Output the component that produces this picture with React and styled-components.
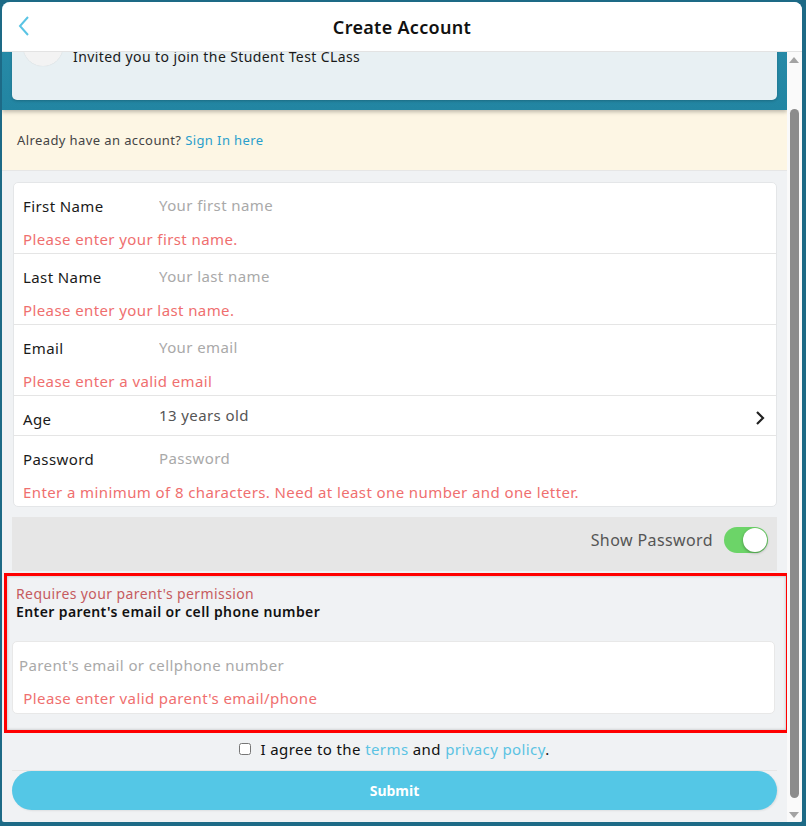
import React from "react";
import styled, { createGlobalStyle } from "styled-components";

const GlobalStyle = createGlobalStyle`
  html, body {
    margin: 0;
    padding: 0;
    background: #1d6a86;
    overflow: hidden;
  }
  * {
    box-sizing: border-box;
  }
  body {
    font-family: "Noto Sans", Lato, sans-serif;
    letter-spacing: 0.4px;
  }
`;

const Frame = styled.div`
  width: 800px;
  height: 820px;
  margin: 2px 0 0 2px;
  background: #f0f2f4;
  border-radius: 8px 8px 2px 2px;
  overflow: hidden;
  display: flex;
  flex-direction: column;
  position: relative;
`;

/* sticky header sits over the scrolled content */
const Header = styled.div`
  position: absolute;
  top: 0;
  left: 0;
  right: 0;
  height: 50px;
  background: #ffffff;
  border-bottom: 1px solid #e3e3e3;
  display: flex;
  align-items: center;
  justify-content: center;
  z-index: 3;
`;

const BackButton = styled.button`
  position: absolute;
  left: 12px;
  top: 13px;
  border: none;
  background: none;
  padding: 0;
  width: 20px;
  height: 24px;
`;

const Title = styled.h1`
  margin: 0;
  font-size: 18px;
  font-weight: 600;
  color: #111;
  letter-spacing: 0.3px;
`;

const Body = styled.div`
  flex: 1;
  display: flex;
  min-height: 0;
  margin-top: 50px;
`;

const Scroll = styled.div`
  flex: 1;
`;

const ScrollContent = styled.div`
  margin-top: ${(p) => -p.$offset}px;
`;

const Scrollbar = styled.div`
  width: 15px;
  flex-shrink: 0;
  background: #fafafa;
  display: flex;
  flex-direction: column;
  align-items: center;
  padding: 5px 1px 4px 0;
  position: relative;
  z-index: 2;
`;

const Arrow = styled.div`
  width: 0;
  height: 0;
  border-left: 5px solid transparent;
  border-right: 5px solid transparent;
  ${(p) =>
    p.$down
      ? "border-top: 6px solid #a3a3a3;"
      : "border-bottom: 6px solid #a3a3a3;"}
`;

const Track = styled.div`
  flex: 1;
  width: 100%;
  display: flex;
  justify-content: center;
  padding: 46px 0 14px;
`;

const Thumb = styled.div`
  width: 9px;
  height: 100%;
  background: #8c8c8c;
  border-radius: 5px;
`;

const InviteBand = styled.div`
  background: linear-gradient(180deg, #2a8eab 0%, #2285a2 100%);
  padding: 10px;
  box-shadow: 0 2px 4px rgba(0, 0, 0, 0.25);
  position: relative;
  z-index: 1;
`;

const InviteCard = styled.div`
  background: #e8f0f3;
  border-radius: 5px;
  height: 90px;
  padding: 16px 12px 0 11px;
  display: flex;
  align-items: flex-start;
  gap: 10px;
  box-shadow: 0 1px 3px rgba(0, 0, 0, 0.2);
`;

const Avatar = styled.div`
  width: 40px;
  height: 40px;
  border-radius: 50%;
  background: #f3f3f3;
  box-shadow: 0 0 1px rgba(0, 0, 0, 0.15);
`;

const InviteText = styled.div`
  margin-top: 21px;
  font-size: 14px;
  line-height: 20px;
  color: #1a1a1a;
`;

const SignInBar = styled.div`
  background: #fdf6e4;
  height: 61px;
  border-bottom: 1px solid #e6e6e6;
  display: flex;
  align-items: center;
  padding: 0 15px;
  font-size: 13px;
  color: #444;
`;

const Link = styled.a`
  color: ${(p) => p.$color || "#2a9fcc"};
  text-decoration: none;
`;

const Section = styled.div`
  padding: 11px 10px 0 10px;
`;

const FormCard = styled.div`
  background: #fff;
  border: 1px solid #e4e6e8;
  border-radius: 5px;
  margin-left: 1px;
`;

const Row = styled.div`
  padding: ${(p) => (p.$compact ? "11px 10px 6px 9px" : "11px 10px 4px 9px")};
  border-bottom: 1px solid #e5e5e5;
  &:last-child {
    border-bottom: none;
  }
`;

const FieldLine = styled.div`
  display: flex;
  align-items: center;
  height: 22px;
`;

const Label = styled.label`
  width: 136px;
  flex-shrink: 0;
  font-size: 15px;
  color: #1a1a1a;
  padding-top: 1px;
`;

const Input = styled.input`
  flex: 1;
  width: 100%;
  height: 20px;
  line-height: 20px;
  border: none;
  outline: none;
  background: transparent;
  padding: 0;
  font-family: inherit;
  font-size: 15px;
  letter-spacing: inherit;
  color: #333;
  &::placeholder {
    color: #a9a9a9;
  }
`;

const Value = styled.div`
  flex: 1;
  font-size: 15px;
  color: #555;
  margin-top: -6px;
`;

const ErrorText = styled.div`
  margin-top: ${(p) => (p.$mt === undefined ? 13 : p.$mt)}px;
  line-height: 20px;
  font-size: 15px;
  color: #ef6f6f;
`;

const ToggleBar = styled.div`
  margin-top: 10px;
  height: 54px;
  background: #e6e6e6;
  display: flex;
  align-items: center;
  justify-content: flex-end;
  padding: 0 9px 8px 0;
  gap: 11px;
  font-size: 16px;
  color: #555;
`;

const Switch = styled.div`
  width: 44px;
  height: 26px;
  border-radius: 13px;
  background: #6cd468;
  position: relative;
`;

const Knob = styled.div`
  position: absolute;
  right: 1px;
  top: 1px;
  width: 24px;
  height: 24px;
  border-radius: 50%;
  background: #fff;
  box-shadow: 0 1px 3px rgba(0, 0, 0, 0.35);
`;

const ParentBox = styled.div`
  margin: 2px -12px 0 -8px;
  border: 3px solid #ff0000;
  background: #f0f2f4;
  box-shadow: inset 0 0 3px rgba(0, 0, 0, 0.25);
  padding: 9px 11px 16px 5px;
`;

const ParentNote = styled.div`
  padding-left: 4px;
  font-size: 14px;
  line-height: 18px;
  color: #c65b5f;
`;

const ParentTitle = styled.div`
  padding-left: 4px;
  font-size: 14px;
  line-height: 18px;
  font-weight: 600;
  color: #111;
`;

const ParentCard = styled.div`
  margin-top: 20px;
  background: #fff;
  border: 1px solid #e8e8e8;
  border-radius: 5px;
  padding: 12px 10px 6px 6px;
  height: 73px;
`;

const AgreeRow = styled.div`
  height: 38px;
  display: flex;
  align-items: center;
  justify-content: center;
  gap: 9px;
  padding-bottom: 6px;
  font-size: 15px;
  color: #111;
  border-bottom: 1px solid #e6e6e6;
`;

const Checkbox = styled.input`
  width: 12px;
  height: 12px;
  margin: 0;
`;

const SubmitButton = styled.button`
  display: block;
  width: 100%;
  height: 39px;
  border: none;
  border-radius: 20px;
  background: #54c7e6;
  color: #fff;
  font-family: inherit;
  font-size: 14px;
  font-weight: 700;
  box-shadow: 1px 1px 2px rgba(0, 0, 0, 0.08);
`;

const Chevron = () => (
  <svg width="12" height="16" viewBox="0 0 12 16">
    <polyline points="3,2 9,8 3,14" fill="none" stroke="#222" strokeWidth="2.2" />
  </svg>
);

const fields = [
  { label: "First Name", placeholder: "Your first name", error: "Please enter your first name." },
  { label: "Last Name", placeholder: "Your last name", error: "Please enter your last name." },
  { label: "Email", placeholder: "Your email", error: "Please enter a valid email" },
];

export default function App() {
  return (
    <>
      <GlobalStyle />
      <Frame>
        <Header>
          <BackButton aria-label="Back">
            <svg width="14" height="22" viewBox="0 0 14 22">
              <polyline points="11,2 3,11 11,20" fill="none" stroke="#5ac4e4" strokeWidth="2" />
            </svg>
          </BackButton>
          <Title>Create Account</Title>
        </Header>
        <Body>
          <Scroll>
            <ScrollContent $offset={52}>
              <InviteBand>
                <InviteCard>
                  <Avatar />
                  <InviteText>Invited you to join the Student Test CLass</InviteText>
                </InviteCard>
              </InviteBand>
              <SignInBar>
                Already have an account?&nbsp;<Link href="#">Sign In here</Link>
              </SignInBar>
              <Section>
                <FormCard>
                  {fields.map((f) => (
                    <Row key={f.label}>
                      <FieldLine>
                        <Label>{f.label}</Label>
                        <Input placeholder={f.placeholder} />
                      </FieldLine>
                      <ErrorText>{f.error}</ErrorText>
                    </Row>
                  ))}
                  <Row $compact>
                    <FieldLine>
                      <Label>Age</Label>
                      <Value>13 years old</Value>
                      <Chevron />
                    </FieldLine>
                  </Row>
                  <Row>
                    <FieldLine>
                      <Label>Password</Label>
                      <Input type="password" placeholder="Password" />
                    </FieldLine>
                    <ErrorText>
                      Enter a minimum of 8 characters. Need at least one number and one letter.
                    </ErrorText>
                  </Row>
                </FormCard>
                <ToggleBar>
                  Show Password
                  <Switch>
                    <Knob />
                  </Switch>
                </ToggleBar>
                <ParentBox>
                  <ParentNote>Requires your parent's permission</ParentNote>
                  <ParentTitle>Enter parent's email or cell phone number</ParentTitle>
                  <ParentCard>
                    <Input placeholder="Parent's email or cellphone number" />
                    <ErrorText $mt={12}>&nbsp;Please enter valid parent's email/phone</ErrorText>
                  </ParentCard>
                </ParentBox>
                <AgreeRow>
                  <Checkbox type="checkbox" />
                  <span>
                    I agree to the <Link href="#" $color="#5bc3e3">terms</Link> and{" "}
                    <Link href="#" $color="#5bc3e3">privacy policy</Link>.
                  </span>
                </AgreeRow>
                <SubmitButton>Submit</SubmitButton>
              </Section>
            </ScrollContent>
          </Scroll>
          <Scrollbar>
            <Arrow />
            <Track>
              <Thumb />
            </Track>
            <Arrow $down />
          </Scrollbar>
        </Body>
      </Frame>
    </>
  );
}
